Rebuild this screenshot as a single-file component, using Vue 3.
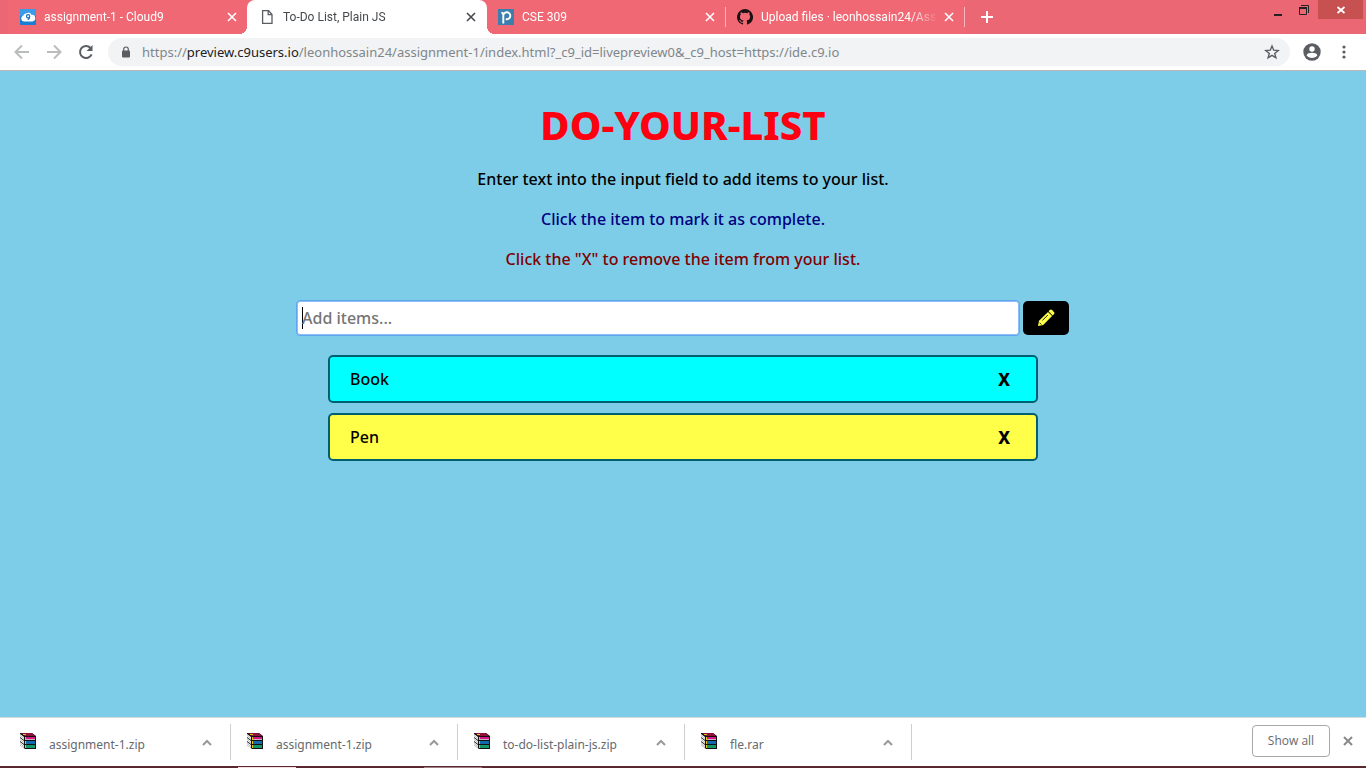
<script setup>
import { ref, onMounted } from 'vue'

const tabs = [
  { title: 'assignment-1 - Cloud9', icon: 'cloud' },
  { title: 'To-Do List, Plain JS', icon: 'page', active: true },
  { title: 'CSE 309', icon: 'piazza' },
  { title: 'Upload files · leonhossain24/Assi', icon: 'github' },
]
const downloads = ['assignment-1.zip', 'assignment-1.zip', 'to-do-list-plain-js.zip', 'fle.rar']
const items = ref([
  { text: 'Book', tone: 'cyan' },
  { text: 'Pen', tone: 'yellow' },
])
const draft = ref('')
const field = ref(null)

function add() {
  const text = draft.value.trim()
  if (!text) return
  items.value.push({ text, tone: items.value.length % 2 ? 'yellow' : 'cyan' })
  draft.value = ''
}

onMounted(() => field.value.focus())
</script>

<template>
  <div class="window">
    <header class="tabstrip">
      <div class="tabs">
        <div v-for="tab in tabs" :key="tab.title" class="tab" :class="{ active: tab.active }">
          <svg v-if="tab.icon === 'cloud'" class="favicon" viewBox="0 0 16 16">
            <rect width="16" height="16" rx="1" fill="#1a7fd4" />
            <rect width="16" height="7" rx="1" fill="#3a9be6" />
            <path d="M4 12.500a3 3 0 0 1-.6-5.900A3 3 0 0 1 6 4.600a3.600 3.600 0 0 1 5.600 1.300 3.300 3.300 0 0 1 .7 6.600z" fill="#fff" />
            <path d="M9.700 7.200a1.600 1.600 0 1 1-3.200 0 1.600 1.600 0 0 1 3.200 0c0 1.800-.7 3-2 3.600" fill="none" stroke="#1a6fc0" stroke-width="1.2" />
          </svg>
          <svg v-else-if="tab.icon === 'page'" class="favicon" viewBox="0 0 16 16" fill="none" stroke="#5a5d61" stroke-width="1.3">
            <path d="M3.600 1.600h6l3.400 3.900v8.900H3.600zM9.200 1.600v4.100h4" />
          </svg>
          <svg v-else-if="tab.icon === 'piazza'" class="favicon" viewBox="0 0 16 16">
            <rect width="16" height="16" fill="#3c7fae" />
            <path d="M5.300 14.500V6.500a3.500 3.500 0 1 1 2.500 3.600M3.400 3.800c1.500 0 1.900.9 1.900 2.400" fill="none" stroke="#fff" stroke-width="1.9" />
          </svg>
          <svg v-else class="favicon" viewBox="0 0 16 16" fill="#1b1214">
            <path d="M8 0a8 8 0 0 0-2.53 15.59c.4.07.55-.17.55-.38v-1.49c-2.01.37-2.53-.49-2.69-.94-.09-.23-.48-.94-.82-1.13-.28-.15-.68-.52-.01-.53.63-.01 1.080.58 1.230.82.72 1.210 1.870.87 2.330.66.07-.52.28-.87.51-1.070-1.780-.2-3.640-.89-3.640-3.950 0-.87.31-1.590.82-2.150-.08-.2-.36-1.020.08-2.120 0 0 .67-.21 2.200.82a7.600 7.600 0 0 1 4 0c1.530-1.040 2.200-.82 2.200-.82.44 1.100.16 1.920.08 2.120.51.56.82 1.270.82 2.150 0 3.070-1.870 3.750-3.650 3.950.29.25.54.73.54 1.480v2.200c0 .21.15.46.55.38A8 8 0 0 0 8 0z" />
          </svg>
          <span class="title">{{ tab.title }}</span>
          <button class="close" aria-label="Close tab">
            <svg viewBox="0 0 10 10"><path d="M1 1l8 8M9 1l-8 8" /></svg>
          </button>
        </div>
        <button class="newtab" aria-label="New tab">
          <svg viewBox="0 0 12 12"><path d="M6 0v12M0 6h12" /></svg>
        </button>
      </div>
      <div class="controls">
        <button class="control" aria-label="Minimize">
          <svg viewBox="0 0 12 12"><path d="M2 9h8" stroke="#222" stroke-width="2" /></svg>
        </button>
        <button class="control" aria-label="Restore">
          <svg viewBox="0 0 12 12" fill="none" stroke="#222"><path d="M3 1.500h7.500V9" /><path d="M1.500 4.500h7v6h-7z" /><path d="M1 4h8" stroke-width="2" /></svg>
        </button>
        <button class="control shut" aria-label="Close window">
          <svg viewBox="0 0 12 12"><path d="M2.500 3l7 6M9.500 3l-7 6" stroke="#fff" stroke-width="1.8" /></svg>
        </button>
      </div>
    </header>

    <nav class="toolbar">
      <button class="nav" aria-label="Back">
        <svg viewBox="0 0 16 16" stroke="#babcbe"><path d="M15 8H2M8 1.500L1.500 8 8 14.500" /></svg>
      </button>
      <button class="nav" aria-label="Forward">
        <svg viewBox="0 0 16 16" stroke="#babcbe"><path d="M1 8h13M8 1.500L14.500 8 8 14.500" /></svg>
      </button>
      <button class="nav" aria-label="Reload">
        <svg viewBox="0 0 16 16" stroke="#5a5d61"><path d="M13.600 10.300A6 6 0 1 1 12.500 4" /><path d="M14.500 1v6h-6z" fill="#5a5d61" stroke="none" /></svg>
      </button>
      <div class="omnibox">
        <svg class="lock" viewBox="0 0 10 12"><rect x="1" y="4.500" width="8" height="7" rx="1" fill="#5a5d61" /><path d="M2.700 5V3.300a2.300 2.300 0 0 1 4.600 0V5" fill="none" stroke="#5a5d61" stroke-width="1.2" /></svg>
        <span class="url">https://<b>preview.c9users.io</b>/leonhossain24/assignment-1/index.html?_c9_id=livepreview0&amp;_c9_host=https://ide.c9.io</span>
        <button class="star" aria-label="Bookmark">
          <svg viewBox="0 0 16 16"><path d="M8 2l1.700 4.200 4.500.3-3.500 2.900 1.200 4.400L8 11.400l-3.900 2.400 1.200-4.400-3.500-2.900 4.500-.3z" fill="none" stroke="#5a5d61" stroke-width="1.400" /></svg>
        </button>
      </div>
      <button class="profile" aria-label="Profile">
        <svg viewBox="0 0 18 18"><circle cx="9" cy="9" r="8.700" fill="#5a5d61" /><circle cx="9" cy="6" r="2.700" fill="#fff" /><path d="M3.600 12.200c1-3.200 9.800-3.200 10.800 0-2.400 3.700-8.400 3.700-10.800 0z" fill="#fff" /></svg>
      </button>
      <button class="menu" aria-label="Menu">
        <svg viewBox="0 0 4 14" fill="#5a5d61"><circle cx="2" cy="2" r="1.600" /><circle cx="2" cy="7" r="1.600" /><circle cx="2" cy="12" r="1.600" /></svg>
      </button>
    </nav>

    <main class="page">
      <h1>DO-YOUR-LIST</h1>
      <p>Enter text into the input field to add items to your list.</p>
      <p class="navy">Click the item to mark it as complete.</p>
      <p class="maroon">Click the "X" to remove the item from your list.</p>
      <form @submit.prevent="add">
        <input ref="field" v-model="draft" type="text" placeholder="Add items..." aria-label="Add items">
        <button class="pencil" aria-label="Add">
          <svg viewBox="0 0 18 18">
            <path d="M1 17l1-5.200L11 2.900l4.100 4.100L6.200 16z" fill="#ffff4a" />
            <path d="M11.600 2.300l1.200-1.200a1.600 1.600 0 0 1 2.300 0l1.800 1.800a1.600 1.600 0 0 1 0 2.300l-1.200 1.200z" fill="#ffff4a" />
            <path d="M2.500 13.700l1.800 1.800M5.400 11.500l5.500-5.500" stroke="#20240a" stroke-width="1" />
          </svg>
        </button>
      </form>
      <ul>
        <li v-for="(item, i) in items" :key="item.text" :class="item.tone">
          <span>{{ item.text }}</span>
          <button class="remove" :aria-label="'Remove ' + item.text" @click="items.splice(i, 1)">X</button>
        </li>
      </ul>
    </main>

    <footer class="shelf">
      <div v-for="(name, i) in downloads" :key="i" class="download">
        <svg class="books" viewBox="0 0 16 16">
          <path d="M0 0h12l4 3v13H5L0 12z" fill="#111" />
          <path d="M1 0h11l3 3H5z" fill="#8c1238" />
          <path d="M5 4h10v2H5z" fill="#d81484" />
          <path d="M6 6h9v1H6z" fill="#c8b8c4" />
          <path d="M6 8h9v3H6z" fill="#1468ac" />
          <path d="M6 12h9v3H6z" fill="#14966a" />
          <path d="M0 1l4 3v3L0 4zM0 5l4 3v3L0 8zM0 9l4 3v3l-4-3z" fill="#fff" />
          <path d="M0 2.500l4 3M0 6.500l4 3M0 10.500l4 3" stroke="#777" stroke-width=".5" />
          <path d="M3 1h3v1H3zM5 4h1v3H5zM5 8h1v3H5zM5 12h1v3H5z" fill="#e6c21e" />
        </svg>
        <span class="file">{{ name }}</span>
        <button class="chevron" aria-label="Download options">
          <svg viewBox="0 0 10 7"><path d="M1 6l4-4 4 4" /></svg>
        </button>
      </div>
      <button class="showall">Show all</button>
      <button class="dismiss" aria-label="Close downloads bar">
        <svg viewBox="0 0 10 10"><path d="M1 1l8 8M9 1l-8 8" /></svg>
      </button>
    </footer>
    <div class="taskbar"><span></span><span class="dim"></span></div>
  </div>
</template>

<style>
body {
  margin: 0;
  background: #7ecde8;
}
</style>

<style scoped>
* {
  box-sizing: border-box;
}
button {
  display: flex;
  align-items: center;
  justify-content: center;
  padding: 0;
  border: 0;
  background: none;
  font: inherit;
  color: inherit;
  flex: none;
}
svg {
  display: block;
  flex: none;
}
.window {
  display: flex;
  flex-direction: column;
  min-height: 100vh;
  font-family: "Noto Sans", "Open Sans", sans-serif;
}
.tabstrip {
  display: flex;
  justify-content: space-between;
  height: 34px;
  background: #eb6774;
}
.tabs {
  display: flex;
  flex: 1;
  min-width: 0;
  padding-left: 8px;
}
.tab {
  position: relative;
  display: flex;
  align-items: center;
  gap: 8px;
  flex: 0 1 239px;
  min-width: 0;
  padding: 0 10px 0 12px;
  background: #f06874;
  color: #fff;
  font-family: Roboto, "Open Sans", sans-serif;
  font-size: 12px;
}
.tab.active {
  z-index: 1;
  flex-basis: 240px;
  padding-right: 11px;
  background: #fff;
  color: #45494d;
  border-radius: 8px 8px 0 0;
}
.tab.active::before,
.tab.active::after {
  content: "";
  position: absolute;
  bottom: 0;
  width: 8px;
  height: 8px;
}
.tab.active::before {
  right: 100%;
  background: radial-gradient(circle at 0 0, #f06874 8px, #fff 8px);
}
.tab.active::after {
  left: 100%;
  background: radial-gradient(circle at 100% 0, #f06874 8px, #fff 8px);
}
.tab:nth-child(n + 3) {
  padding: 0 11px;
}
.tab:nth-child(n + 3)::after {
  content: "";
  position: absolute;
  right: 0;
  top: 7px;
  width: 1px;
  height: 20px;
  background: #f8b6bc;
}
.favicon {
  width: 16px;
  height: 16px;
}
.title {
  flex: 1;
  min-width: 0;
  overflow: hidden;
  white-space: nowrap;
  mask-image: linear-gradient(to right, #000 calc(100% - 28px), transparent);
}
.close {
  width: 10px;
  height: 34px;
  margin-left: -2px;
}
.close svg {
  width: 10px;
  height: 10px;
  stroke: currentColor;
  stroke-width: 1.6;
}
.newtab {
  width: 24px;
  margin-left: 10px;
  color: #fff;
}
.newtab svg {
  width: 12px;
  height: 12px;
  stroke: #fff;
  stroke-width: 2;
}
.controls {
  display: flex;
  height: 19px;
  padding-right: 3px;
}
.control {
  width: 26px;
}
.control:first-child svg {
  margin-top: 4px;
}
.control svg {
  width: 12px;
  height: 12px;
}
.shut {
  width: 45px;
  margin-left: 1px;
  background: #c75050;
}
.toolbar {
  display: flex;
  align-items: center;
  height: 37px;
  padding: 0 20px 0 14px;
  background: #fff;
  border-bottom: 1px solid #b9b5b8;
}
.nav {
  width: 16px;
  height: 28px;
  margin-right: 16px;
}
.nav svg {
  width: 16px;
  height: 16px;
  fill: none;
  stroke-width: 2;
}
.omnibox {
  display: flex;
  align-items: center;
  flex: 1;
  min-width: 0;
  height: 28px;
  margin-right: 13px;
  padding: 0 10px 0 13px;
  border-radius: 14px;
  background: #f1f3f4;
}
.nav:nth-child(3) {
  margin-right: 14px;
}
.lock {
  width: 10px;
  height: 12px;
}
.url {
  flex: 1;
  min-width: 0;
  margin-left: 11px;
  overflow: hidden;
  white-space: nowrap;
  color: #80868b;
  font-size: 13px;
}
.url b {
  font-weight: 400;
  color: #202124;
}
.star svg {
  width: 16px;
  height: 16px;
}
.profile svg {
  width: 18px;
  height: 18px;
}
.menu {
  margin-left: 21px;
}
.menu svg {
  width: 4px;
  height: 14px;
}
.page {
  flex: 1;
  padding: 27px 20px;
  background: #7ecde8;
  color: #000;
  font-size: 16px;
  font-weight: 500;
  line-height: 24px;
  text-align: center;
}
h1 {
  margin: 0 0 15px;
  color: #ff0010;
  font-size: 40px;
  font-weight: 800;
  line-height: 54px;
}
p {
  margin: 0 0 16px;
}
.navy {
  color: #000080;
}
.maroon {
  color: #800000;
}
form {
  display: flex;
  gap: 4px;
  max-width: 772px;
  margin: 30px auto 20px;
}
input {
  flex: 1;
  min-width: 0;
  height: 34px;
  padding: 0 4px;
  border: 1px solid #8fbdf5;
  border-radius: 3px;
  outline: 1px solid #5fa5f0;
  background: #fff;
  font: inherit;
}
input::placeholder {
  color: #757575;
  opacity: 1;
}
input:placeholder-shown:focus {
  caret-color: transparent;
  background: linear-gradient(#000, #000) 4px center / 1px 22px no-repeat #fff;
}
.pencil {
  width: 46px;
  border-radius: 5px;
  background: #000;
}
.pencil svg {
  width: 18px;
  height: 18px;
}
ul {
  max-width: 710px;
  margin: 0 auto;
  padding: 0;
  list-style: none;
}
li {
  display: flex;
  align-items: center;
  justify-content: space-between;
  height: 48px;
  margin-bottom: 10px;
  padding: 0 26px 0 20px;
  border: 2px solid #006070;
  border-radius: 5px;
}
.cyan {
  background: #00ffff;
}
.yellow {
  background: #ffff4a;
}
.remove {
  padding-top: 2px;
  font-size: 17px;
  font-weight: 800;
}
.shelf {
  display: flex;
  align-items: center;
  height: 49px;
  padding-right: 13px;
  background: #fff;
  border-top: 1px solid #d5dce0;
  color: #66696d;
  font-size: 12px;
}
.download {
  display: flex;
  align-items: center;
  flex: 0 1 227px;
  min-width: 0;
  height: 36px;
  padding: 0 18px 0 16px;
  border-right: 1px solid #cfcfcf;
}
.download:first-child {
  flex-basis: 231px;
  padding-left: 20px;
}
.books {
  width: 16px;
  height: 16px;
  margin-bottom: 2px;
}
.file {
  flex: 1;
  min-width: 0;
  margin: 4px 0 0 13px;
  overflow: hidden;
  white-space: nowrap;
}
.chevron svg {
  width: 10px;
  height: 7px;
  fill: none;
  stroke: #97999b;
  stroke-width: 2;
}
.showall {
  width: 78px;
  height: 32px;
  margin-left: auto;
  margin-bottom: 2px;
  padding-bottom: 2px;
  border: 1px solid #a8a8a8;
  border-radius: 4px;
  font-family: "Open Sans", sans-serif;
}
.dismiss {
  margin: 0 0 2px 13px;
}
.dismiss svg {
  width: 10px;
  height: 10px;
  stroke: #8a8a8c;
  stroke-width: 2;
}
.taskbar {
  display: flex;
  align-items: flex-end;
  gap: 128px;
  height: 2px;
  padding-left: 238px;
  background: #5a2830;
}
.taskbar span {
  width: 58px;
  height: 1px;
  background: #f6dfe2;
}
.taskbar .dim {
  background: #a08085;
}
</style>
